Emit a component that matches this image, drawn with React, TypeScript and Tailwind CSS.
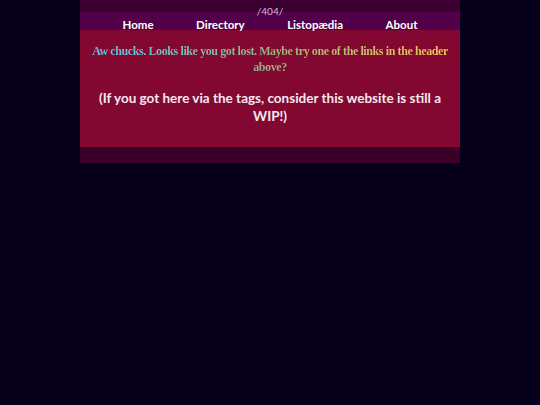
import React from "react";

export default function App() {
  const nav = ["Home", "Directory", "Listopædia", "About"];
  return (
    <div className="min-h-[405px] w-full bg-[#07001a]">
      <div className="mx-auto w-[380px]" style={{ fontFamily: "Lato, 'Noto Sans', sans-serif" }}>
        <div className="h-[12px] bg-[#3b0030] flex items-end justify-center">
          <span className="text-[10px] leading-[12px] text-[#d8b8d0] translate-y-[5px]">/404/</span>
        </div>
        <nav className="h-[18px] bg-[#52004a] flex items-center justify-evenly">
          {nav.map((n) => (
            <a key={n} className="text-[11.5px] font-bold text-white leading-[18px] pt-[7px]">
              {n}
            </a>
          ))}
        </nav>
        <main className="bg-[#820832] h-[117px] px-[8px] pt-[13px] text-center">
          <p
            className="font-bold text-[12px] leading-[16px] tracking-[-0.4px] bg-gradient-to-r from-[#5cc6ec] via-[#95b57e] to-[#f8c84a] bg-clip-text text-transparent"
            style={{ fontFamily: "'Liberation Serif', 'DejaVu Serif', serif" }}
          >
            Aw chucks. Looks like you got lost. Maybe try one of the links in the header above?
          </p>
          <p className="mt-[14px] font-bold text-[13.5px] leading-[18px] text-[#f4e8ee] px-[6px]">
            (If you got here via the tags, consider this website is still a WIP!)
          </p>
        </main>
        <footer className="h-[16px] bg-[#3a0028]" />
      </div>
    </div>
  );
}
